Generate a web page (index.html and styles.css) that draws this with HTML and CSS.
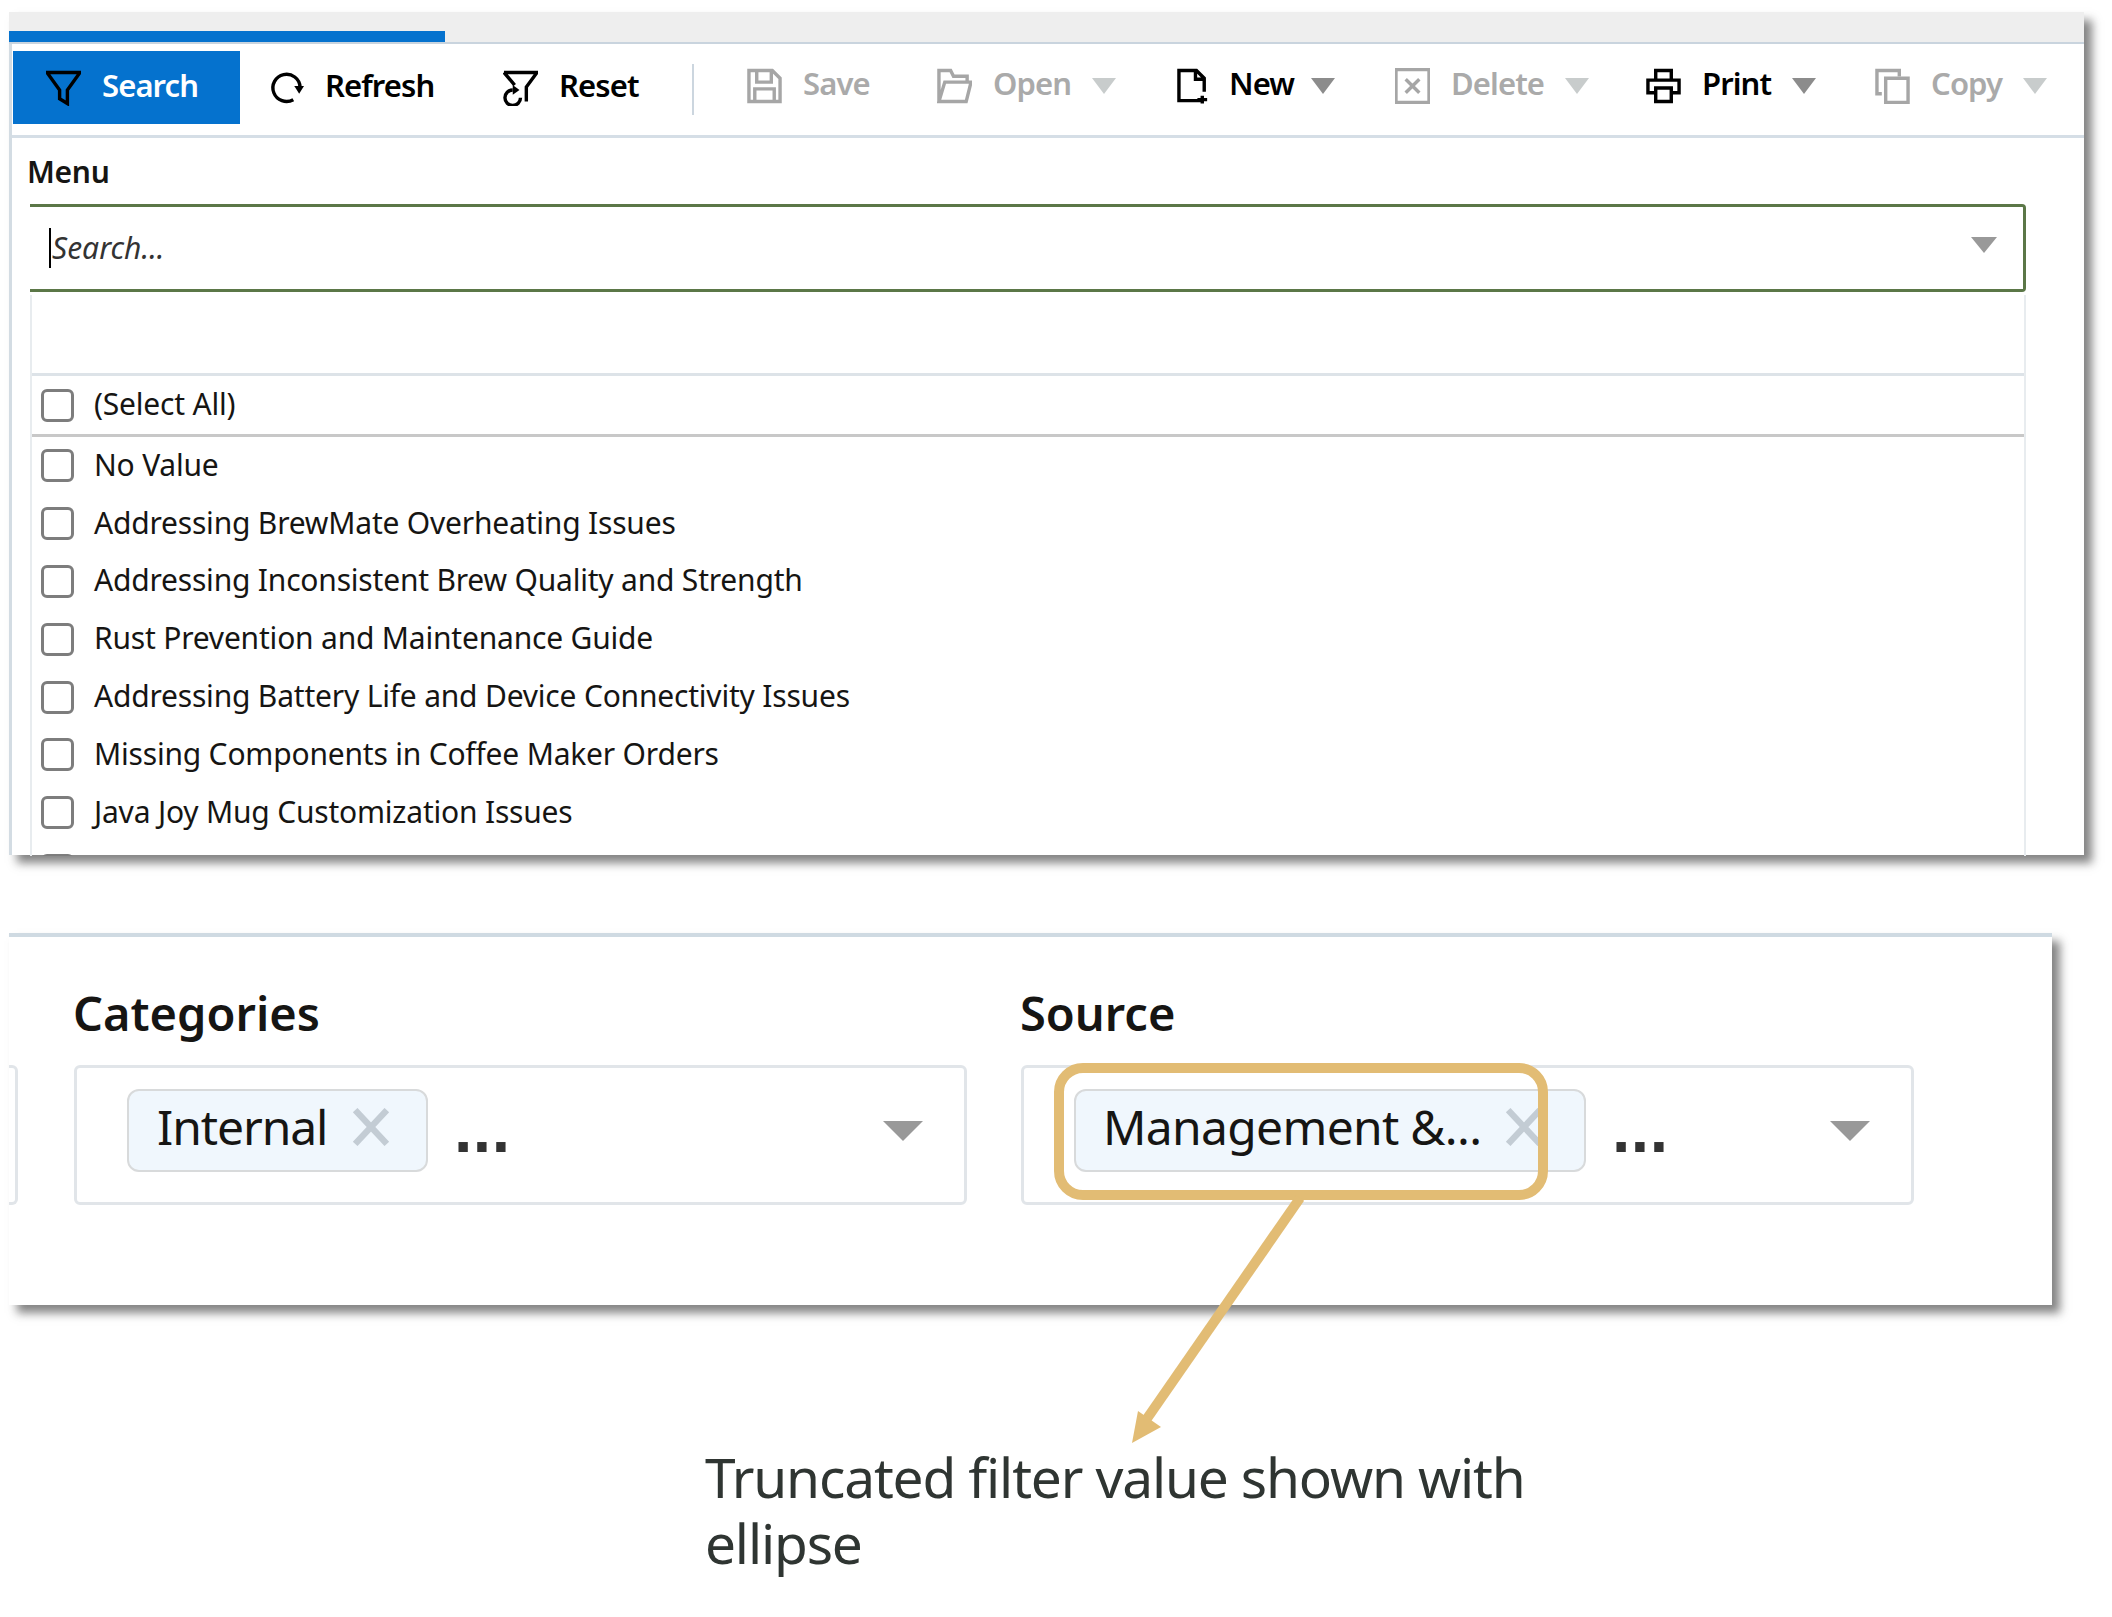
FILE: index.html
```html
<!DOCTYPE html>
<html lang="en">

<head>
    <meta charset="UTF-8">
    <title>Filter Menu</title>
    <link rel="stylesheet" href="styles.css">
</head>

<body>
    <div class="panel panel-top">
        <div class="tab-bar">
            <div class="tab-active"></div>
        </div>

        <div class="toolbar">
            <button class="tool tool-main tool-primary">
                <svg class="icon" viewBox="0 0 36 36"><path d="M1 2H35L22 20V34L14 29V20Z" /></svg>
                <span>Search</span>
            </button>
            <button class="tool tool-main">
                <svg class="icon" viewBox="0 0 36 36"><path d="M25 30A14 14 0 1 1 32 17" /><path class="solid" d="M26 16H36L31 24Z" /></svg>
                <span>Refresh</span>
            </button>
            <button class="tool tool-main">
                <svg class="icon" viewBox="0 0 36 36"><path d="M1 2H35L24 17V32M1 2L12 15" /><path d="M18 28A8 8 0 1 1 10 20" /><path class="solid" d="M10 15L17 20L10 25Z" /></svg>
                <span>Reset</span>
            </button>
            <div class="tool-sep"></div>
            <button class="tool tool-off">
                <svg class="icon" viewBox="0 0 36 36"><path d="M2 2H26L34 10V34H2ZM10 2V14H25V2M8 34V21H28V34" /></svg>
                <span>Save</span>
            </button>
            <button class="tool tool-off">
                <svg class="icon" viewBox="0 0 36 36"><path d="M2 34V2H14L17 8H31V14M2 34L8 14H35L30 34Z" /></svg>
                <span>Open</span>
                <i class="caret"></i>
            </button>
            <button class="tool tool-new">
                <svg class="icon" viewBox="0 0 36 36"><path d="M25 33H2V2H20L28 10V24M19 2V11H28" /><path d="M26 28V36M21 32H31" /></svg>
                <span>New</span>
                <i class="caret"></i>
            </button>
            <button class="tool tool-off">
                <svg class="icon" viewBox="0 0 36 36"><path d="M1 1H35V35H1ZM11 11L25 25M25 11L11 25" /></svg>
                <span>Delete</span>
                <i class="caret"></i>
            </button>
            <button class="tool">
                <svg class="icon" viewBox="0 0 36 36"><path d="M10 12V2H26V12M10 25H2V12H34V25H26M10 20H26V34H10Z" /></svg>
                <span>Print</span>
                <i class="caret"></i>
            </button>
            <button class="tool tool-off">
                <svg class="icon" viewBox="0 0 36 36"><path d="M7 26H2V2H25V8M11 10H34V35H11Z" /></svg>
                <span>Copy</span>
                <i class="caret"></i>
            </button>
        </div>

        <div class="menu-field">
            <label class="menu-label">Menu</label>
            <div class="search-box">
                <span class="search-text">Search...</span>
                <i class="caret caret-search"></i>
            </div>

            <div class="dropdown">
                <div class="dropdown-filter"></div>
                <div class="check-row check-all"><i class="checkbox"></i><span>(Select All)</span></div>
                <div class="check-row"><i class="checkbox"></i><span>No Value</span></div>
                <div class="check-row"><i class="checkbox"></i><span>Addressing BrewMate Overheating Issues</span></div>
                <div class="check-row"><i class="checkbox"></i><span>Addressing Inconsistent Brew Quality and Strength</span></div>
                <div class="check-row"><i class="checkbox"></i><span>Rust Prevention and Maintenance Guide</span></div>
                <div class="check-row"><i class="checkbox"></i><span>Addressing Battery Life and Device Connectivity Issues</span></div>
                <div class="check-row"><i class="checkbox"></i><span>Missing Components in Coffee Maker Orders</span></div>
                <div class="check-row"><i class="checkbox"></i><span>Java Joy Mug Customization Issues</span></div>
                <div class="check-row"><i class="checkbox"></i></div>
            </div>
        </div>
    </div>

    <div class="panel panel-bottom">
        <div class="box-stub"></div>

        <div class="filter">
            <h2 class="filter-title">Categories</h2>
            <div class="filter-box">
                <div class="chip chip-short">
                    <span>Internal</span>
                    <svg class="chip-x" viewBox="0 0 36 36"><path d="M3 2L33 34M33 2L3 34" /></svg>
                </div>
                <span class="more">...</span>
                <i class="caret caret-filter"></i>
            </div>
        </div>

        <div class="filter filter-source">
            <h2 class="filter-title">Source</h2>
            <div class="filter-box">
                <div class="chip chip-long">
                    <span>Management &amp;...</span>
                    <svg class="chip-x" viewBox="0 0 36 36"><path d="M3 2L33 34M33 2L3 34" /></svg>
                </div>
                <span class="more">...</span>
                <i class="caret caret-filter"></i>
            </div>
        </div>
    </div>

    <p class="callout">Truncated filter value shown with ellipse</p>

    <!-- gold highlight and arrow lie over the panel -->
    <svg class="overlay" viewBox="0 0 2112 1617">
        <rect x="1059" y="1068" width="484" height="127" rx="24" class="gold-line" />
        <path d="M1300 1198L1146 1420" class="gold-line" />
        <path d="M1132 1443L1138 1411L1161 1427Z" class="gold-fill" />
    </svg>
</body>

</html>
```

FILE: styles.css
```css
/* General reset */

* {
    margin: 0;
    padding: 0;
    box-sizing: border-box;
}

body {
    position: relative;
    width: 2112px;
    height: 1617px;
    padding: 12px 0 0 9px;
    overflow: hidden;
    font-family: "Noto Sans", sans-serif;
    background-color: #fff;
    color: #161513;
}

.panel {
    background-color: #fff;
    box-shadow: 8px 8px 9px rgba(50, 50, 50, 0.6);
}

.panel-top {
    width: 2075px;
    height: 843px;
    border-left: 3px solid #d3dce3;
}

/* Tab strip */

.tab-bar {
    height: 32px;
    margin-left: -3px;
    padding-top: 19px;
    background-color: #eee;
    border-bottom: 2px solid #c9d4de;
}

.tab-active {
    width: 436px;
    height: 11px;
    background-color: #0572ce;
}

/* Toolbar */

.toolbar {
    display: grid;
    grid-template-columns: 256px 234px 189px 55px 190px 240px 218px 251px 229px 1fr;
    align-items: center;
    height: 94px;
    padding-left: 1px;
    border-bottom: 3px solid #d5dee6;
}

.tool {
    display: flex;
    align-items: center;
    gap: 21px;
    border: none;
    background: none;
    font-family: inherit;
    font-size: 31px;
    font-weight: 600;
    letter-spacing: -0.9px;
    color: #000;
    text-align: left;
    cursor: pointer;
    position: relative;
    top: -4px;
}

.tool span {
    margin-bottom: 5px;
}

.tool-main {
    top: -2px;
}

.tool-primary {
    width: 227px;
    height: 73px;
    padding-left: 33px;
    background-color: #0572ce;
    color: #fff;
}

.tool-new {
    gap: 17px;
}

.tool-off {
    color: #aaa;
}

.tool-sep {
    width: 2px;
    height: 51px;
    background-color: #ccd6df;
}

.icon {
    width: 35px;
    height: 36px;
    fill: none;
    stroke: currentColor;
    stroke-width: 3.5;
    flex-shrink: 0;
}

.tool .icon {
    stroke: #000;
}

.tool-off .icon {
    stroke: #a6a6a6;
}

.icon .solid {
    fill: #000;
    stroke: none;
}

.caret {
    display: block;
    width: 0;
    height: 0;
    border-left: 12px solid transparent;
    border-right: 12px solid transparent;
    border-top: 16px solid #8c8c8c;
}

.tool-off .caret {
    border-top-color: #c8cccc;
}

/* Menu field */

.menu-field {
    width: 1996px;
    margin-left: 18px;
}

.menu-label {
    display: block;
    height: 66px;
    margin-left: -3px;
    padding-top: 12px;
    font-size: 30px;
    font-weight: 600;
    letter-spacing: -0.3px;
    line-height: 44px;
}

.search-box {
    display: flex;
    align-items: center;
    justify-content: space-between;
    height: 88px;
    padding: 0 26px 0 19px;
    border: 3px solid #5b7747;
    border-left: none;
    border-radius: 0 4px 4px 0;
}

.search-text {
    padding-left: 1px;
    border-left: 2px solid #000;
    font-size: 30px;
    font-style: italic;
    line-height: 40px;
    color: #333;
}

.caret-search {
    margin-top: -6px;
    border-top-color: #999;
    border-left-width: 13px;
    border-right-width: 13px;
}

/* Dropdown list */

.dropdown {
    height: 561px;
    margin-top: 3px;
    overflow: hidden;
    border-left: 2px solid #e8ecef;
    border-right: 2px solid #e8ecef;
}

.dropdown-filter {
    height: 81px;
    border-bottom: 3px solid #dde3e8;
}

.check-row {
    display: flex;
    align-items: center;
    gap: 20px;
    height: 57.8px;
    padding-left: 9px;
    font-size: 30px;
    letter-spacing: -0.2px;
}

.check-row span {
    margin-bottom: 3px;
}

.check-all {
    height: 61px;
    border-bottom: 3px solid #c8c8c8;
}

.checkbox {
    display: block;
    width: 33px;
    height: 33px;
    background-color: #fff;
    border: 3px solid #7d7d7d;
    border-radius: 6px;
    flex-shrink: 0;
}

/* Bottom panel */

.panel-bottom {
    display: flex;
    width: 2043px;
    height: 372px;
    margin-top: 78px;
    border-top: 4px solid #cfdae2;
}

.box-stub {
    width: 9px;
    height: 140px;
    margin-top: 128px;
    border: 3px solid #e1e5e9;
    border-left: none;
    border-radius: 0 6px 6px 0;
}

.filter {
    width: 893px;
    margin-left: 56px;
}

.filter-source {
    margin-left: 54px;
}

.filter-title {
    height: 128px;
    margin-left: -1px;
    padding-top: 46px;
    font-size: 47px;
    font-weight: 600;
    line-height: 60px;
}

.filter-box {
    display: flex;
    align-items: flex-start;
    height: 140px;
    padding-left: 50px;
    border: 3px solid #e1e5e9;
    border-radius: 6px;
}

.chip {
    display: flex;
    align-items: center;
    height: 83px;
    margin-top: 21px;
    padding-left: 28px;
    background-color: #f0f7fd;
    border: 2px solid #d8dadb;
    border-radius: 12px;
    font-size: 48px;
    letter-spacing: -1.1px;
}

.chip span {
    position: relative;
    top: -4px;
}

.chip-short {
    width: 301px;
    gap: 25px;
}

.chip-long {
    width: 512px;
    gap: 24px;
    padding-left: 27px;
    letter-spacing: -0.7px;
}

.chip-x {
    width: 38px;
    height: 38px;
    fill: none;
    stroke: #c3ccd4;
    stroke-width: 6;
    flex-shrink: 0;
    position: relative;
    top: -4px;
}

.more {
    margin-left: 26px;
    margin-top: 20px;
    font-family: "Liberation Sans", sans-serif;
    font-size: 66px;
    font-weight: 700;
    line-height: 82px;
    letter-spacing: 0.5px;
    color: #333;
}

.caret-filter {
    margin-left: auto;
    margin-right: 41px;
    margin-top: 53px;
    border-top: 20px solid #999;
    border-left-width: 20px;
    border-right-width: 20px;
}

/* Annotation */

.callout {
    width: 900px;
    margin: 139px 0 0 696px;
    font-size: 55px;
    letter-spacing: -1.15px;
    line-height: 66px;
    color: #2f3532;
}

.overlay {
    position: absolute;
    top: 0;
    left: 0;
    width: 2112px;
    height: 1617px;
    pointer-events: none;
}

.gold-line {
    fill: none;
    stroke: #e2bc74;
    stroke-width: 10;
}

.gold-fill {
    fill: #e2bc74;
}
```
